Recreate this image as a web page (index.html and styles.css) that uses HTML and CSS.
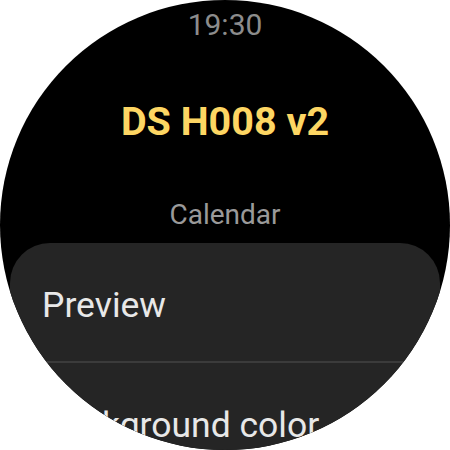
FILE: index.html
```html
<!DOCTYPE html>
<html>
<head>
<meta charset="utf-8">
<link rel="stylesheet" href="styles.css">
</head>
<body>
<div class="watch">
  <div class="time">19:30</div>
  <div class="title">DS H008 v2</div>
  <div class="subtitle">Calendar</div>
  <div class="card">
    <div class="row first">Preview</div>
    <div class="divider"></div>
    <div class="row">Background color</div>
  </div>
</div>
</body>
</html>
```
FILE: styles.css
```css
html, body {
  margin: 0;
  padding: 0;
  background: #ffffff;
}
.watch {
  width: 450px;
  height: 450px;
  border-radius: 50%;
  overflow: hidden;
  background: #000000;
  font-family: Roboto, "Noto Sans", sans-serif;
  display: flex;
  flex-direction: column;
  align-items: center;
}
.time {
  margin-top: 9px;
  font-size: 30px;
  line-height: 32px;
  color: #8c8c8c;
}
.title {
  margin-top: 58.5px;
  font-size: 39.5px;
  line-height: 44px;
  font-weight: 700;
  color: #fdd663;
}
.subtitle {
  margin-top: 55px;
  font-size: 28px;
  line-height: 32px;
  color: #9a9a9a;
}
.card {
  margin-top: 12.5px;
  width: 430px;
  flex: 1 0 auto;
  background: #252525;
  border-radius: 40px 40px 0 0;
}
.row {
  padding: 42px 32px 0;
  font-size: 35.5px;
  line-height: 40px;
  color: #e8e8e8;
  white-space: nowrap;
}
.row.first {
  padding: 42px 32px 36px;
}
.divider {
  height: 2px;
  background: #3b3b3b;
}
```
